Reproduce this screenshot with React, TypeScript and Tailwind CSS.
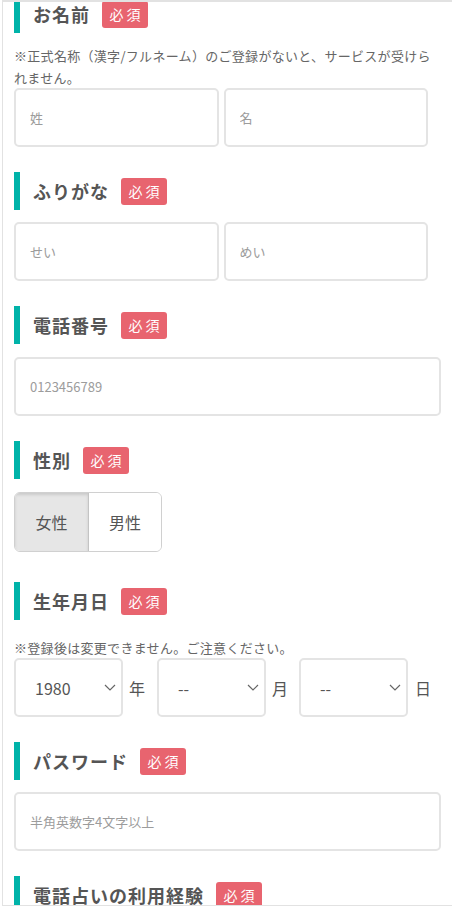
import React from 'react';

const FONT = "font-['Noto_Sans_CJK_JP','Noto_Sans',sans-serif]";

function Badge() {
  return (
    <span className="ml-[12px] flex h-[27px] w-[46px] shrink-0 items-center justify-center rounded-[3px] bg-[#e8646f] pl-[3px] text-[14px] leading-none tracking-[3px] text-white">
      必須
    </span>
  );
}

function Heading({ title, className = '' }: { title: string; className?: string }) {
  return (
    <div className={`flex h-[38px] items-center border-l-[6px] border-[#00b3a9] pl-[13px] ${className}`}>
      <h2 className="text-[18px] font-bold leading-none tracking-[1px] text-[#555]">{title}</h2>
      <Badge />
    </div>
  );
}

function TextBox({ placeholder, className = '' }: { placeholder: string; className?: string }) {
  return (
    <input
      type="text"
      placeholder={placeholder}
      className={`h-[59px] rounded-[5px] border-2 border-[#e4e4e4] bg-white pl-[14px] text-[13px] text-[#555] outline-none placeholder:text-[#9c9c9c] ${FONT} ${className}`}
    />
  );
}

function Chevron() {
  return (
    <svg width="12" height="7" viewBox="0 0 12 7" fill="none">
      <path d="M1 1l5 5 5-5" stroke="#666" strokeWidth="1.2" />
    </svg>
  );
}

function FakeSelect({ value }: { value: string }) {
  return (
    <div className="flex h-[59px] w-[109px] shrink-0 items-center justify-between rounded-[5px] border-2 border-[#e4e4e4] bg-white pl-[19px] pr-[5px]">
      <span className="text-[16px] text-[#555]">{value}</span>
      <Chevron />
    </div>
  );
}

export default function App() {
  return (
    <div className={`ml-[2px] h-[906px] overflow-hidden border-t-2 border-b border-l border-[#e2e2e2] bg-white px-[11px] ${FONT}`}>
      {/* お名前 */}
      <section className="-mt-[7px]">
        <Heading title="お名前" />
        <p className="mt-[12px] text-[13px] leading-[21.5px] tracking-[0.3px] text-[#666]">
          ※正式名称（漢字/フルネーム）のご登録がないと、サービスが受けら
          <br />
          れません。
        </p>
        <div className="grid w-[414px] grid-cols-2 gap-[5px]">
          <TextBox placeholder="姓" />
          <TextBox placeholder="名" />
        </div>
      </section>

      {/* ふりがな */}
      <section className="mt-[25px]">
        <Heading title="ふりがな" />
        <div className="mt-[12px] grid w-[414px] grid-cols-2 gap-[5px]">
          <TextBox placeholder="せい" />
          <TextBox placeholder="めい" />
        </div>
      </section>

      {/* 電話番号 */}
      <section className="mt-[25px]">
        <Heading title="電話番号" />
        <div className="mt-[13px] flex">
          <TextBox placeholder="0123456789" className="w-full" />
        </div>
      </section>

      {/* 性別 */}
      <section className="mt-[25px]">
        <Heading title="性別" />
        <div className="mt-[13px] flex h-[60px] w-[148px] overflow-hidden rounded-[6px] border border-[#d0d0d0] text-[16px] text-[#555]">
          <div className="flex w-[74px] items-center justify-center border-r border-[#c4c4c4] bg-[#e6e6e6] shadow-[inset_0_2px_3px_rgba(0,0,0,0.12)]">
            女性
          </div>
          <div className="flex flex-1 items-center justify-center bg-white">男性</div>
        </div>
      </section>

      {/* 生年月日 */}
      <section className="mt-[30px]">
        <Heading title="生年月日" />
        <p className="mt-[17px] text-[13px] leading-[21px] tracking-[0.3px] text-[#666]">※登録後は変更できません。ご注意ください。</p>
        <div className="flex items-center text-[16px] text-[#555]">
          <FakeSelect value="1980" />
          <span className="ml-[6px] mr-[12px]">年</span>
          <FakeSelect value="--" />
          <span className="ml-[6px] mr-[11px]">月</span>
          <FakeSelect value="--" />
          <span className="ml-[7px]">日</span>
        </div>
      </section>

      {/* パスワード */}
      <section className="mt-[25px]">
        <Heading title="パスワード" />
        <div className="mt-[12px] flex">
          <TextBox placeholder="半角英数字4文字以上" className="w-full" />
        </div>
      </section>

      {/* 電話占いの利用経験 */}
      <section className="mt-[25px]">
        <Heading title="電話占いの利用経験" />
      </section>
    </div>
  );
}
